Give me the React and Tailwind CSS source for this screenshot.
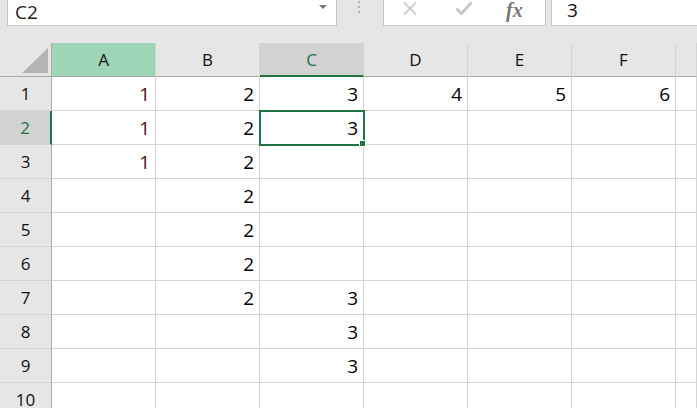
import React from "react";

const COLS = ["A", "B", "C", "D", "E", "F", ""];

// row data: col index -> value
const DATA = [
  { A: "1", B: "2", C: "3", D: "4", E: "5", F: "6" },
  { A: "1", B: "2", C: "3" },
  { A: "1", B: "2" },
  { B: "2" },
  { B: "2" },
  { B: "2" },
  { B: "2", C: "3" },
  { C: "3" },
  { C: "3" },
  {},
];

const font = { fontFamily: '"Open Sans", "Noto Sans CJK KR", sans-serif' };

function FormulaBar() {
  return (
    <div className="flex h-[43px] bg-[#e6e6e6]">
      <div className="ml-[7px] flex h-[26px] w-[330px] items-center justify-between border border-t-0 border-[#c6c6c6] bg-white pl-[7px] pr-[9px]">
        <span className="text-[19px] leading-none text-[#222]">C2</span>
        <span className="mb-[12px] h-0 w-0 border-x-[4px] border-t-[4px] border-x-transparent border-t-[#7a7a7a]" />
      </div>
      <div className="ml-[21px] flex w-[2px] flex-col gap-[3px] pt-[1px]">
        <span className="h-[2px] w-[2px] bg-[#b3b3b3]" />
        <span className="h-[2px] w-[2px] bg-[#b3b3b3]" />
        <span className="h-[2px] w-[2px] bg-[#b3b3b3]" />
      </div>
      <div className="ml-[23px] flex h-[26px] w-[163px] items-start border border-t-0 border-[#c6c6c6] bg-white">
        <svg className="ml-[18px] mt-[2px]" width="16" height="14" viewBox="0 0 16 14">
          <path d="M2 0.5 L14 12.5 M14 0.5 L2 12.5" stroke="#c6c6c6" strokeWidth="1.6" fill="none" />
        </svg>
        <svg className="ml-[37px] mt-[1px]" width="18" height="15" viewBox="0 0 18 15">
          <path d="M1.5 7.5 L6.5 12.5 L16.5 1.5" stroke="#c6c6c6" strokeWidth="2.8" fill="none" />
        </svg>
        <span
          className="ml-[33px] -mt-[5px] text-[20px] font-bold italic text-[#777]"
          style={{ fontFamily: '"Liberation Serif", serif' }}
        >
          fx
        </span>
      </div>
      <div className="ml-[5px] flex h-[26px] flex-1 items-center border border-t-0 border-r-0 border-[#c6c6c6] bg-white pl-[15px]">
        <span className="-mt-[4px] text-[19px] leading-none text-[#111]">3</span>
      </div>
    </div>
  );
}

function Corner() {
  return (
    <div className="relative h-[34px] border-b border-r border-[#ababab] bg-[#e6e6e6]">
      <span className="absolute bottom-[3px] right-[3px] h-0 w-0 border-b-[25px] border-l-[26px] border-b-[#b4b4b4] border-l-transparent" />
    </div>
  );
}

function ColHeader({ label }) {
  let cls = "bg-[#e6e6e6] border-b border-b-[#ababab] text-[#111]";
  if (label === "A") cls = "bg-[#9fd5b7] border-b border-b-[#ababab] text-[#111]";
  if (label === "C") cls = "bg-[#d2d2d2] border-b-2 border-b-[#217346] text-[#217346]";
  return (
    <div
      className={`flex h-[34px] items-center justify-center border-r border-r-[#d4d4d4] pt-[1px] text-[17px] ${cls}`}
    >
      {label}
    </div>
  );
}

function RowHeader({ n }) {
  const sel = n === 2;
  return (
    <div
      className={`flex h-[34px] items-center justify-center border-b border-b-[#d4d4d4] text-[17px] ${
        sel
          ? "border-r-2 border-r-[#217346] bg-[#d2d2d2] text-[#217346]"
          : "border-r border-r-[#ababab] bg-[#e6e6e6] text-[#111]"
      }`}
    >
      {n}
    </div>
  );
}

export default function App() {
  return (
    <div className="h-[408px] w-[697px] overflow-hidden bg-white" style={font}>
      <FormulaBar />
      <div className="relative grid grid-cols-[52px_104px_104px_104px_104px_104px_104px_1fr]">
        <Corner />
        {COLS.map((c, i) => (
          <ColHeader key={i} label={c} />
        ))}
        {DATA.map((row, r) => (
          <React.Fragment key={r}>
            <RowHeader n={r + 1} />
            {COLS.map((c, i) => (
              <div
                key={i}
                className={`flex h-[34px] items-center justify-end border-b border-r border-[#d4d4d4] pr-[5px] pt-[1px] text-[19px] ${
                  c === "A" ? "text-[#4a1010]" : "text-black"
                }`}
              >
                {row[c] || ""}
              </div>
            ))}
          </React.Fragment>
        ))}
        {/* active cell C2 */}
        <div className="pointer-events-none absolute left-[259px] top-[67px] h-[36px] w-[106px] border-2 border-[#217346]" />
        <div className="pointer-events-none absolute left-[359px] top-[97px] h-[7px] w-[7px] border border-white bg-[#217346]" />
      </div>
    </div>
  );
}
